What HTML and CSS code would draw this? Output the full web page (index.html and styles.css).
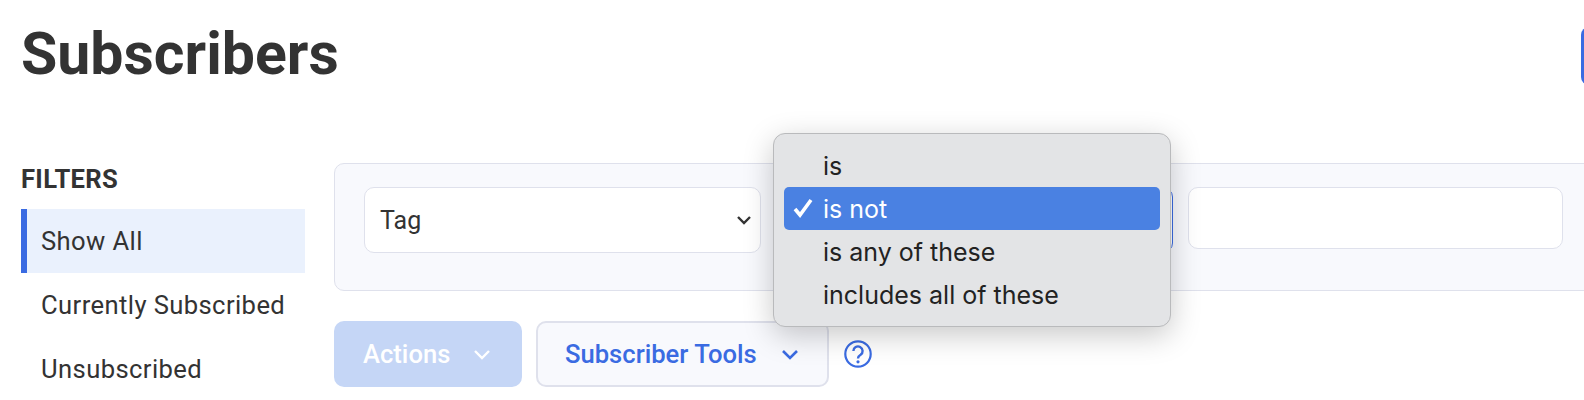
FILE: index.html
```html
<!DOCTYPE html>
<html lang="en">
<head>
    <meta charset="UTF-8">
    <title>Subscribers</title>
    <link rel="stylesheet" href="styles.css">
</head>
<body>
    <div class="page">
        <div class="header">
            <h1>Subscribers</h1>
            <button class="new-btn" type="button"></button>
        </div>

        <div class="content">
            <div class="sidebar">
                <h2>FILTERS</h2>
                <a class="filter active">Show All</a>
                <a class="filter">Currently Subscribed</a>
                <a class="filter">Unsubscribed</a>
            </div>

            <div class="main">
                <div class="panel">
                    <div class="field field-tag">
                        <span>Tag</span>
                        <svg class="chevron" width="16" height="10" viewBox="0 0 16 10"><path d="M2 2l6 6 6-6" fill="none" stroke="#333" stroke-width="2.4"/></svg>
                    </div>
                    <div class="field field-op"></div>
                    <div class="field field-value"></div>
                </div>

                <div class="actions">
                    <button class="btn btn-disabled" type="button">
                        Actions
                        <svg width="18" height="11" viewBox="0 0 18 11"><path d="M2 2l7 7 7-7" fill="none" stroke="#fff" stroke-width="2.4"/></svg>
                    </button>
                    <button class="btn btn-tools" type="button">
                        Subscriber Tools
                        <svg width="18" height="11" viewBox="0 0 18 11"><path d="M2 2l7 7 7-7" fill="none" stroke="#3a6be2" stroke-width="2.6"/></svg>
                    </button>
                    <svg class="help" width="28" height="28" viewBox="0 0 28 28">
                        <circle cx="14" cy="14" r="12.7" fill="none" stroke="#3a6be2" stroke-width="2.2"/>
                        <path d="M9.4 11a4.6 4.6 0 1 1 7.2 3.8c-1.6 1-2.6 1.8-2.6 3.6" fill="none" stroke="#3a6be2" stroke-width="2.4"/>
                        <circle cx="14" cy="21.8" r="1.6" fill="#3a6be2"/>
                    </svg>
                </div>

                <!-- native option list, open over the operator select -->
                <ul class="menu">
                    <li>is</li>
                    <li class="selected">
                        <svg class="check" width="22" height="22" viewBox="0 0 22 22"><path d="M3 12l5 6L19 3" fill="none" stroke="#fff" stroke-width="3.6"/></svg>
                        is not
                    </li>
                    <li>is any of these</li>
                    <li>includes all of these</li>
                </ul>
            </div>
        </div>
    </div>
</body>
</html>
```

FILE: styles.css
```css
html, body {
    height: 400px;
    overflow: hidden;
}
body {
    margin: 0;
    background: #fff;
    color: #333;
    font-family: Roboto, Arial, sans-serif;
}
.page {
    width: 1640px;
    padding-left: 21px;
    box-sizing: border-box;
}
.header {
    display: flex;
    justify-content: space-between;
    align-items: flex-start;
    height: 163px;
}
h1 {
    margin: 15px 0 0;
    font-size: 59px;
    line-height: 78px;
    font-weight: 700;
}
.new-btn {
    width: 59px;
    height: 58px;
    margin-top: 27px;
    background: #3a6be2;
    border: none;
    border-radius: 8px;
}
.content {
    display: flex;
    gap: 29px;
}
.sidebar {
    width: 284px;
    flex: none;
}
h2 {
    margin: 0;
    height: 46px;
    font-size: 25.6px;
    line-height: 32px;
    font-weight: 700;
    letter-spacing: 0.3px;
}
.filter {
    display: block;
    height: 64px;
    padding-left: 20px;
    font-size: 25.6px;
    line-height: 64px;
    letter-spacing: 0.4px;
}
.filter.active {
    padding-left: 14px;
    border-left: 6px solid #3a6be2;
    background: #eaf1fd;
}
.main {
    position: relative;
    width: 1280px;
}
.panel {
    display: flex;
    gap: 15px;
    box-sizing: border-box;
    height: 128px;
    padding: 23px 29px;
    background: #f8f9fd;
    border: 1px solid #dfe1ec;
    border-radius: 10px;
}
.field {
    display: flex;
    align-items: center;
    justify-content: space-between;
    box-sizing: border-box;
    height: 66px;
    padding: 0 8px 0 15px;
    background: #fff;
    border: 1px solid #dfe1ec;
    border-radius: 10px;
    font-size: 25px;
}
.field-tag {
    width: 397px;
}
.field-op {
    width: 388px;
    margin-left: 9px;
    border-color: #3a6be2;
}
.field-value {
    width: 375px;
    height: 62px;
}
.actions {
    display: flex;
    align-items: center;
    gap: 15px;
    margin-top: 30px;
}
.btn {
    display: flex;
    align-items: center;
    box-sizing: border-box;
    height: 66px;
    padding: 0 27px 0 29px;
    border-radius: 10px;
    font-family: Roboto, Arial, sans-serif;
    font-size: 25.6px;
    font-weight: 500;
}
.btn-disabled {
    width: 188px;
    gap: 23px;
    margin-right: -1px;
    background: #c5d6f6;
    border: none;
    color: #fff;
}
.btn-tools {
    width: 293px;
    gap: 24px;
    padding-left: 27px;
    background: #f8f9fd;
    border: 2px solid #dfe1ec;
    color: #3a6be2;
}
.menu {
    position: absolute;
    left: 439px;
    top: -30px;
    width: 398px;
    box-sizing: border-box;
    margin: 0;
    padding: 10px;
    list-style: none;
    background: #e3e4e6;
    border: 1px solid #b9babc;
    border-radius: 12px;
    box-shadow: 0 8px 30px rgba(0, 0, 0, 0.22);
    color: #222;
    font-family: Inter, Arial, sans-serif;
    font-size: 25px;
}
.menu li {
    position: relative;
    height: 43px;
    padding-left: 39px;
    line-height: 45px;
    border-radius: 5px;
}
.menu li.selected {
    background: #4a81e2;
    color: #fff;
}
.check {
    position: absolute;
    left: 8px;
    top: 10px;
}
```
